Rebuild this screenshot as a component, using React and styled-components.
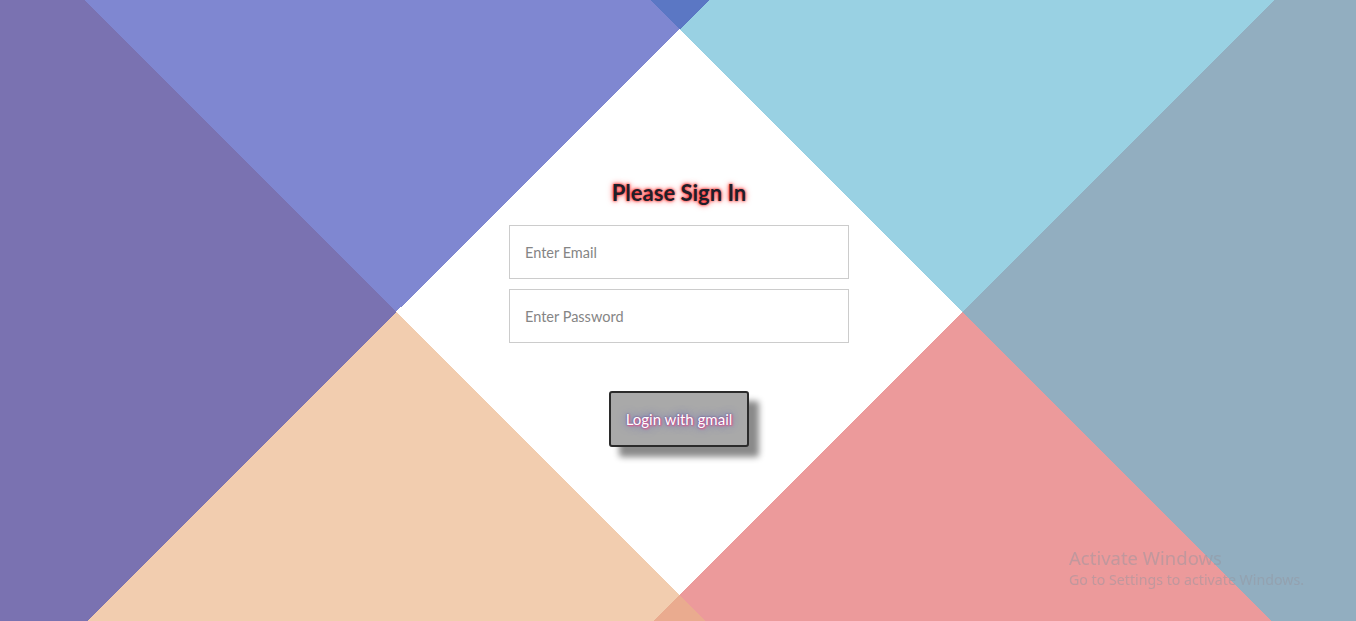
import React from "react";
import styled, { createGlobalStyle } from "styled-components";

const Global = createGlobalStyle`
  html, body { margin: 0; padding: 0; }
  body { font-family: "Open Sans", "Liberation Sans", sans-serif; overflow: hidden; }
`;

const Page = styled.div`
  display: grid;
  width: 100vw;
  height: 100vh;
  background: #ffffff;
  overflow: hidden;
`;

const Backdrop = styled.svg`
  grid-area: 1 / 1;
  width: 100%;
  height: 100%;
  display: block;
`;

const Content = styled.main`
  grid-area: 1 / 1;
  display: flex;
  flex-direction: column;
  align-items: center;
  padding-top: 177px;
  padding-left: 2px;
  z-index: 1;
`;

const Title = styled.h2`
  margin: 0 0 16px;
  font-family: "Lato", "Open Sans", sans-serif;
  font-weight: 700;
  font-size: 22px;
  line-height: 32px;
  color: #1f1f2a;
  text-shadow: 0 0 3px #ff0000, 0 0 6px #ff5a5a;
`;

const Form = styled.form`
  display: flex;
  flex-direction: column;
  align-items: center;
  gap: 10px;
`;

const Field = styled.input`
  box-sizing: border-box;
  width: 340px;
  height: 54px;
  padding: 0 15px;
  border: 1px solid #cccccc;
  background: #ffffff;
  font-family: "Lato", "Open Sans", sans-serif;
  font-size: 14.5px;
  color: #333;
  outline: none;
  &::placeholder { color: #858585; }
`;

const Button = styled.button`
  box-sizing: border-box;
  margin-top: 38px;
  width: 140px;
  height: 56px;
  background: #a9a9a9;
  border: 2px solid #2b2b2b;
  border-radius: 3px;
  box-shadow: 10px 10px 6px #8a8a8a;
  color: #ffffff;
  font-family: "Lato", "Open Sans", sans-serif;
  font-size: 15px;
  text-shadow: 1px 1px 2px #ff4d8a, 0 0 10px #5a5ab8, 0 0 2px #3a3a8a;
  cursor: pointer;
`;

const Watermark = styled.div`
  position: fixed;
  left: 1069px;
  top: 546px;
  font-family: "Noto Sans", "Open Sans", sans-serif;
  color: rgba(150, 150, 160, 0.5);
  pointer-events: none;
  z-index: 2;
`;

const WatermarkTitle = styled.div`
  font-size: 18.5px;
  line-height: 24px;
`;

const WatermarkLine = styled.div`
  font-size: 14.2px;
  line-height: 20px;
`;

const shapes = [
  { pts: "0,0 84,0 396,312 87,621 0,621", fill: "#7a72b1" },
  { pts: "84,0 709,0 396,312", fill: "#7f87d1" },
  { pts: "650,0 1274,0 962,312", fill: "#99d1e3" },
  { pts: "650,0 709,0 679.5,29.5", fill: "#5b77c4" },
  { pts: "1274,0 1356,0 1356,621 1271,621 962,312", fill: "#92aec0" },
  { pts: "962,312 1271,621 653,621", fill: "#ec9a9b" },
  { pts: "396,312 705,621 87,621", fill: "#f2cdaf" },
  { pts: "653,621 705,621 679,595", fill: "#eaab8f" },
];

export default function App() {
  return (
    <Page>
      <Global />
      <Backdrop
        viewBox="0 0 1356 621"
        preserveAspectRatio="none"
        shapeRendering="crispEdges"
        aria-hidden="true"
      >
        {shapes.map((s, i) => (
          <polygon key={i} points={s.pts} fill={s.fill} />
        ))}
      </Backdrop>
      <Content>
        <Title>Please Sign In</Title>
        <Form onSubmit={(e) => e.preventDefault()}>
          <Field type="email" placeholder="Enter Email" />
          <Field type="password" placeholder="Enter Password" />
          <Button type="submit">Login with gmail</Button>
        </Form>
      </Content>
      <Watermark>
        <WatermarkTitle>Activate Windows</WatermarkTitle>
        <WatermarkLine>Go to Settings to activate Windows.</WatermarkLine>
      </Watermark>
    </Page>
  );
}
